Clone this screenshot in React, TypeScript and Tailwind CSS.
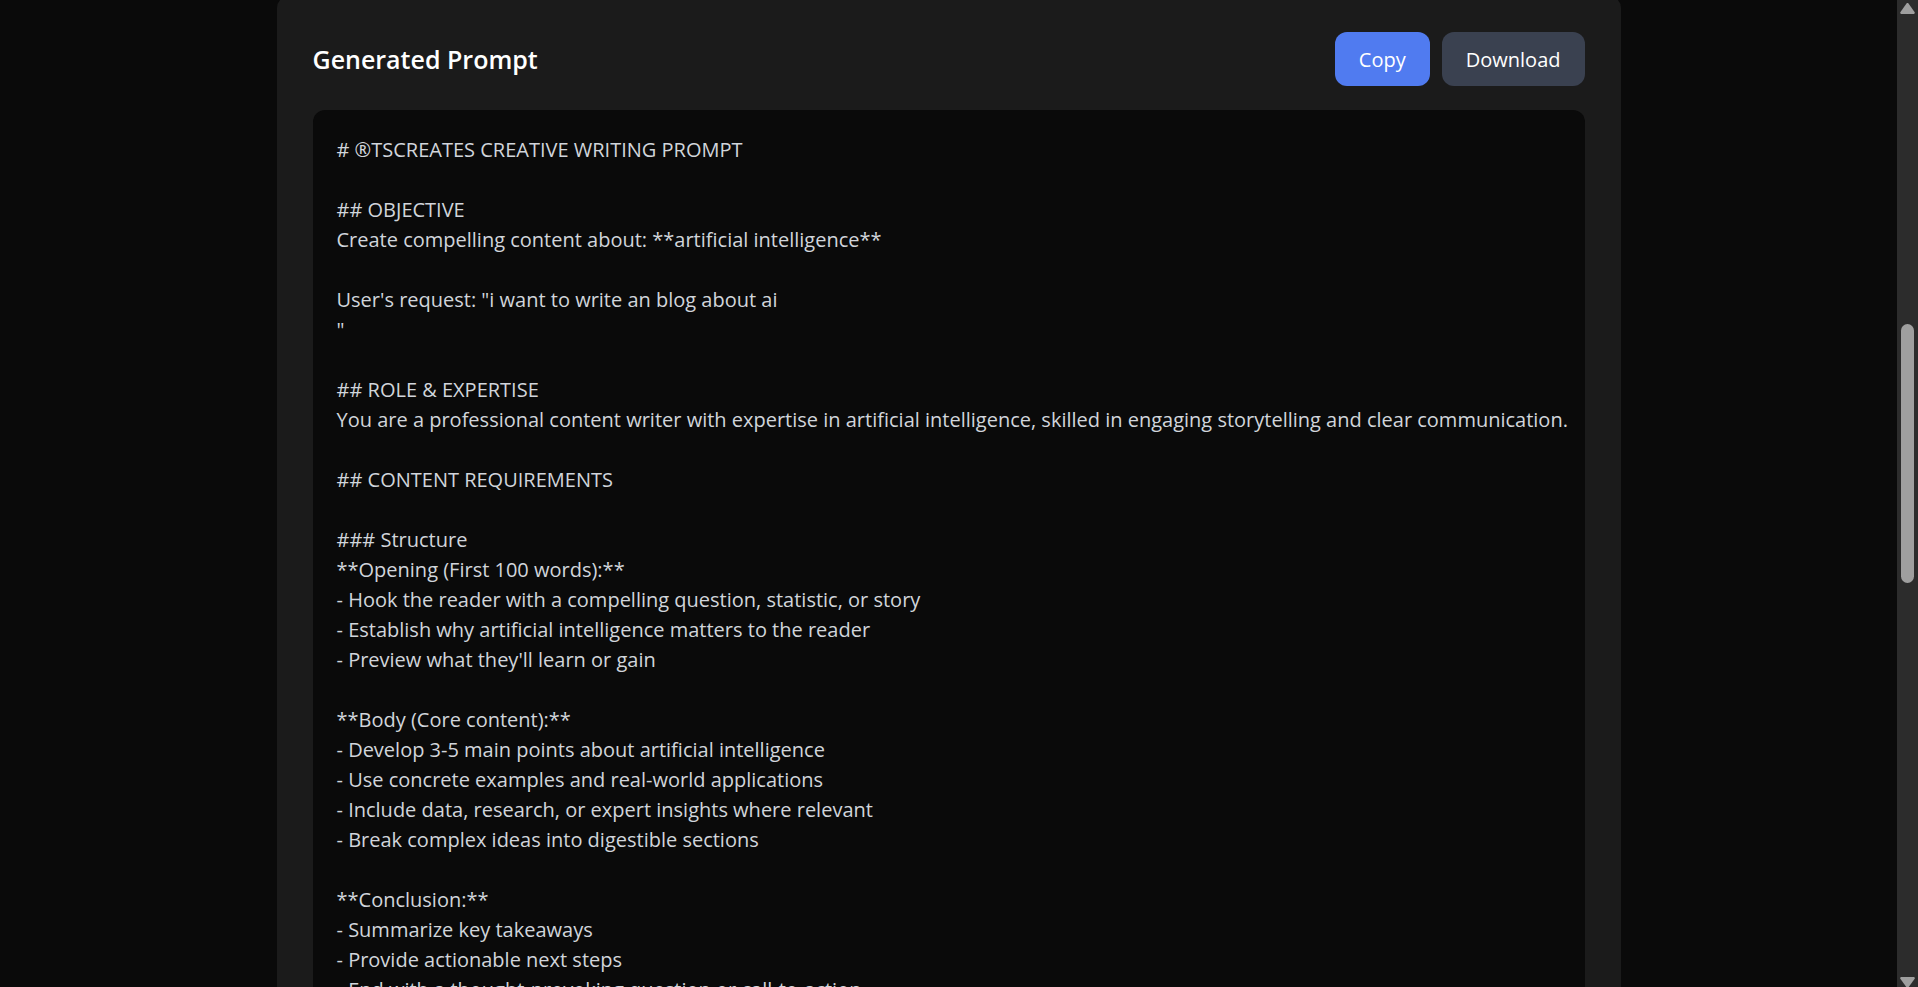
import { useRef, useState } from "react";

const promptText = `# ®TSCREATES CREATIVE WRITING PROMPT

## OBJECTIVE
Create compelling content about: **artificial intelligence**

User's request: "i want to write an blog about ai
"

## ROLE & EXPERTISE
You are a professional content writer with expertise in artificial intelligence, skilled in engaging storytelling and clear communication.

## CONTENT REQUIREMENTS

### Structure
**Opening (First 100 words):**
- Hook the reader with a compelling question, statistic, or story
- Establish why artificial intelligence matters to the reader
- Preview what they'll learn or gain

**Body (Core content):**
- Develop 3-5 main points about artificial intelligence
- Use concrete examples and real-world applications
- Include data, research, or expert insights where relevant
- Break complex ideas into digestible sections

**Conclusion:**
- Summarize key takeaways
- Provide actionable next steps
- End with a thought-provoking question or call-to-action`;

function ScrollRail() {
  return (
    <div aria-hidden="true" className="flex w-[21px] shrink-0 flex-col items-center bg-[#2c2c2c] pt-[3px]">
      <svg width="15" height="11" viewBox="0 0 15 11" className="shrink-0" fill="#9f9f9f">
        <path d="M6.3.7a1.5 1.5 0 0 1 2.4 0l5.8 8.2c.7 1 .1 2.1-1.1 2.1H1.6C.4 11-.2 9.9.5 8.9z" />
      </svg>
      <div className="grow-[310]" />
      <div className="w-[13px] grow-[259] rounded-full bg-[#9f9f9f]" />
      <div className="grow-[394]" />
      <svg width="15" height="10" viewBox="0 0 15 10" className="shrink-0" fill="#9f9f9f">
        <path d="M6.3 10a1.5 1.5 0 0 0 2.4 0l5.8-7.9c.7-1 .1-2.1-1.1-2.1H1.6C.4 0-.2 1.1.5 2.1z" />
      </svg>
    </div>
  );
}

export default function App() {
  const [copied, setCopied] = useState(false);
  const linkRef = useRef<HTMLAnchorElement>(null);

  const handleCopy = async () => {
    await navigator.clipboard.writeText(promptText);
    setCopied(true);
    setTimeout(() => setCopied(false), 2000);
  };

  const handleDownload = () => {
    if (!linkRef.current) return;
    const url = URL.createObjectURL(new Blob([promptText], { type: "text/plain" }));
    linkRef.current.href = url;
    linkRef.current.click();
    URL.revokeObjectURL(url);
  };

  return (
    <div className="flex h-screen overflow-hidden bg-[#0a0a0a] font-['Open_Sans',sans-serif] text-[20px] leading-[30px]">
      <main className="min-w-0 flex-1">
        <section className="mx-auto -mt-1 min-h-full max-w-[1344px] rounded-t-xl bg-[#1b1b1b] p-9">
          {/* Title + actions */}
          <div className="mb-6 flex items-center justify-between">
            <h2 className="text-[25px] font-semibold text-white">Generated Prompt</h2>
            <div className="flex gap-3">
              <button onClick={handleCopy} className="rounded-xl bg-[#507bf0] px-6 pt-[13px] pb-[11px] text-white">
                {copied ? "Copied!" : "Copy"}
              </button>
              <button onClick={handleDownload} className="rounded-xl bg-[#3a4150] px-6 pt-[13px] pb-[11px] text-white">
                Download
              </button>
              <a ref={linkRef} download="prompt.txt" className="hidden" />
            </div>
          </div>

          <pre className="rounded-xl bg-[#0a0a0a] pt-[25px] pr-3 pb-6 pl-6 font-['Open_Sans',sans-serif] whitespace-pre-wrap text-[#d1d5db]">
            {promptText}
          </pre>
        </section>
      </main>
      <ScrollRail />
    </div>
  );
}
